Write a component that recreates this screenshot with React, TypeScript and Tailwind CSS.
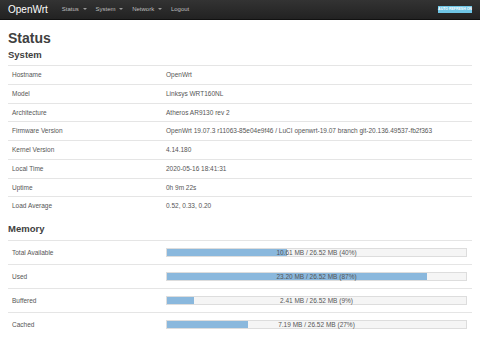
import React from 'react';

const system: [string, string][] = [
  ['Hostname', 'OpenWrt'],
  ['Model', 'Linksys WRT160NL'],
  ['Architecture', 'Atheros AR9130 rev 2'],
  ['Firmware Version', 'OpenWrt 19.07.3 r11063-85e04e9f46 / LuCI openwrt-19.07 branch git-20.136.49537-fb2f363'],
  ['Kernel Version', '4.14.180'],
  ['Local Time', '2020-05-16 18:41:31'],
  ['Uptime', '0h 9m 22s'],
  ['Load Average', '0.52, 0.33, 0.20'],
];

const memory: { label: string; used: string; pct: number }[] = [
  { label: 'Total Available', used: '10.61 MB', pct: 40 },
  { label: 'Used', used: '23.20 MB', pct: 87 },
  { label: 'Buffered', used: '2.41 MB', pct: 9 },
  { label: 'Cached', used: '7.19 MB', pct: 27 },
];

function Caret() {
  return <span className="ml-[2px] inline-block border-x-[2px] border-t-[2px] border-x-transparent border-t-[#999] align-middle" />;
}

export default function App() {
  return (
    <div className="h-[338px] w-[480px] overflow-hidden bg-white text-[#404040] font-['Liberation_Sans',Arial,sans-serif]">
      {/* top bar */}
      <div className="flex h-[20px] items-center border-b border-[#111] bg-gradient-to-b from-[#333] to-[#222] px-2">
        <span className="text-[10px] leading-none text-white">OpenWrt</span>
        <div className="ml-[14px] flex items-center gap-[9px] text-[6px] text-[#bfbfbf]">
          <span>Status <Caret /></span>
          <span>System <Caret /></span>
          <span>Network <Caret /></span>
          <span>Logout</span>
        </div>
        <span className="ml-auto flex h-[7px] w-[34px] items-center justify-center bg-[#6fc6e6] text-[3.5px] font-bold text-white">
          AUTO REFRESH ON
        </span>
      </div>

      <div className="px-2">
        <h2 className="mt-[10px] text-[14px] font-bold leading-[16px]">Status</h2>

        <h3 className="mt-[3px] text-[9.5px] font-bold leading-[12px] text-[#404040]">System</h3>
        <div className="mt-[4px]">
          {system.map(([k, v]) => (
            <div key={k} className="flex h-[18.75px] items-center border-t border-[#e5e5e5] text-[6.5px] text-[#555]">
              <span className="w-[158px] pl-1">{k}</span>
              <span>{v}</span>
            </div>
          ))}
        </div>

        <h3 className="mt-[8px] text-[9.5px] font-bold leading-[12px]">Memory</h3>
        <div className="mt-[5px]">
          {memory.map((m) => (
            <div key={m.label} className="flex h-[24px] items-center border-t border-[#e5e5e5] text-[6.5px] text-[#555]">
              <span className="w-[158px] pl-1">{m.label}</span>
              <div className="relative h-[9px] w-[301px] border border-[#ddd] bg-[#f5f5f5]">
                <div className="h-full bg-[#8ab8dd]" style={{ width: `${m.pct}%` }} />
                <span className="absolute inset-0 flex items-center justify-center text-[6.5px] text-[#555]">
                  {m.used} / 26.52 MB ({m.pct}%)
                </span>
              </div>
            </div>
          ))}
        </div>
      </div>
    </div>
  );
}
